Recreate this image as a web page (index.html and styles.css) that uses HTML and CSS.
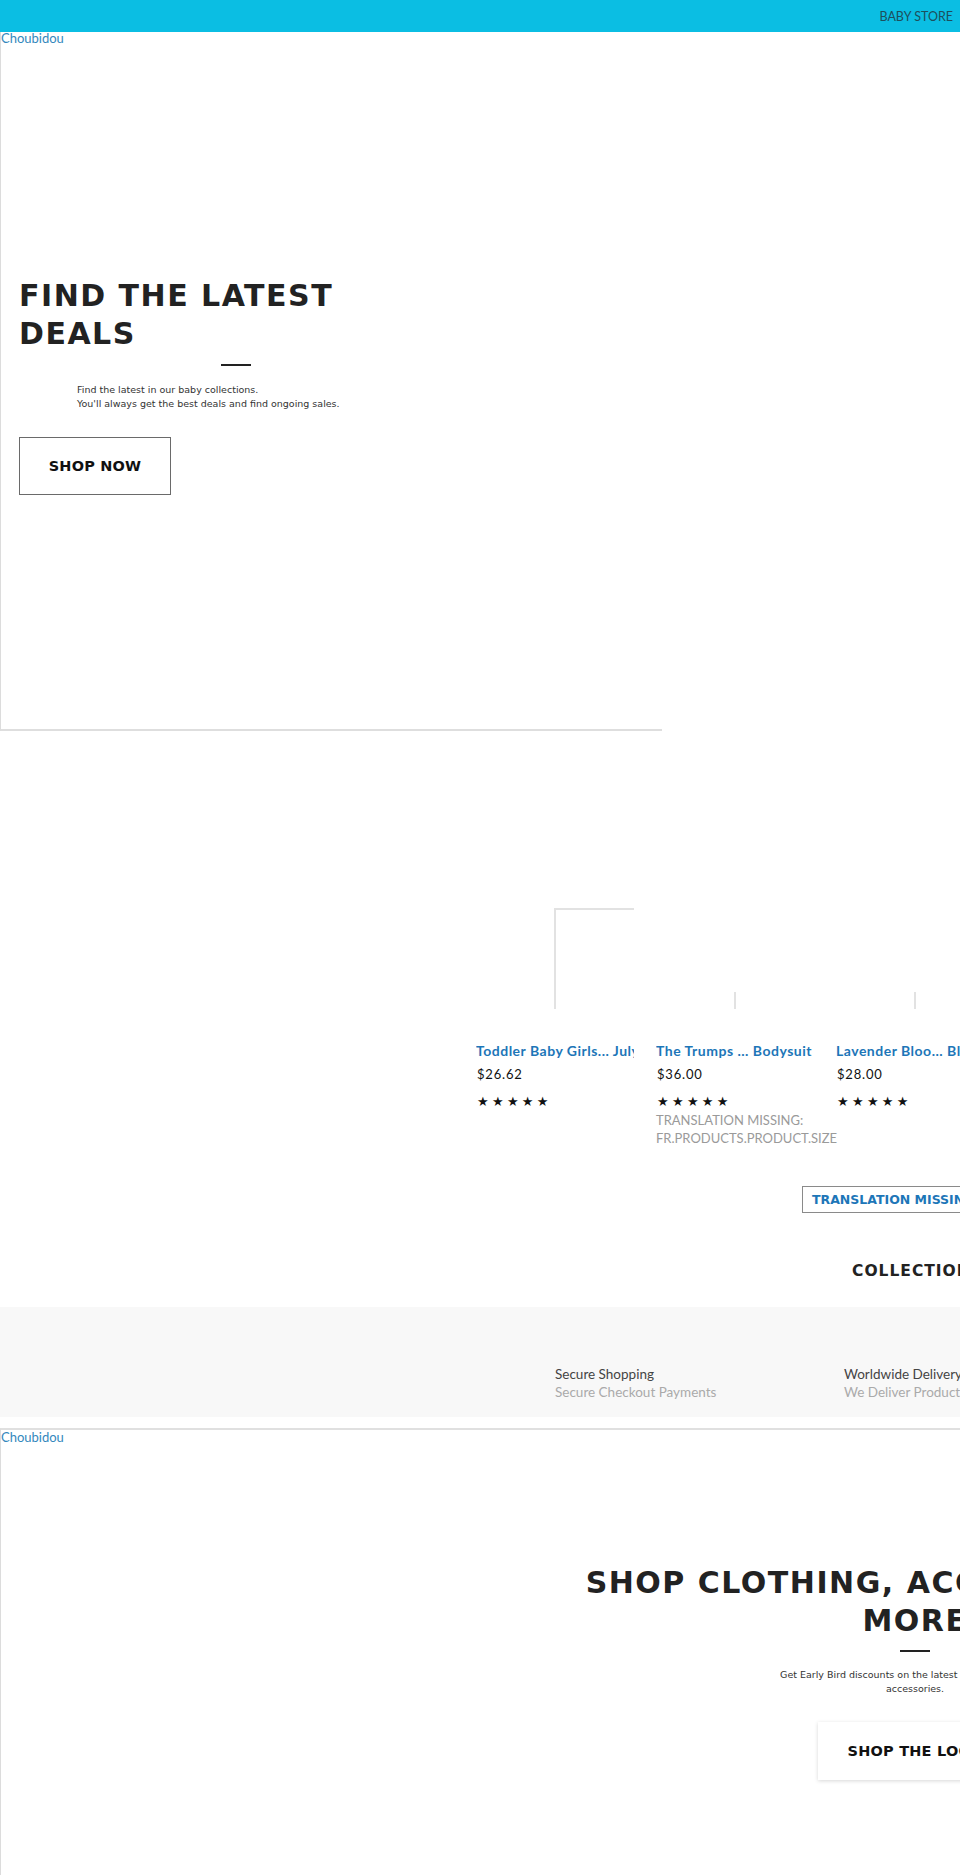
FILE: index.html
```html
<!DOCTYPE html>
<html>
    <head>
        <meta charset="UTF-8">
        <title>Choubidou - Baby Store</title>
        <link rel="stylesheet" href="styles.css">
    </head>
    <body>
        <div class="page">
            <div class="topbar">
                <span class="store-name">BABY STORE</span>
            </div>

            <div class="hero hero-left">
                <a class="brand" href="#">Choubidou</a>
                <div class="hero-content">
                    <h1 class="hero-title">FIND THE LATEST<br>DEALS</h1>
                    <span class="rule"></span>
                    <p class="hero-text">Find the latest in our baby collections.<br>You'll always get the best deals and find ongoing sales.</p>
                    <a class="hero-btn" href="#">SHOP NOW</a>
                </div>
            </div>

            <div class="products">
                <div class="product">
                    <div class="thumb"><span class="thumb-img tall"></span></div>
                    <a class="product-title" href="#">Toddler Baby Girls... July</a>
                    <div class="product-price">$26.62</div>
                    <div class="stars">★★★★★</div>
                </div>
                <div class="product">
                    <div class="thumb"><span class="thumb-img"></span></div>
                    <a class="product-title" href="#">The Trumps ... Bodysuit</a>
                    <div class="product-price">$36.00</div>
                    <div class="stars">★★★★★</div>
                    <div class="product-size">TRANSLATION MISSING:<br>FR.PRODUCTS.PRODUCT.SIZE</div>
                </div>
                <div class="product">
                    <div class="thumb"><span class="thumb-img"></span></div>
                    <a class="product-title" href="#">Lavender Bloo... Blossom</a>
                    <div class="product-price">$28.00</div>
                    <div class="stars">★★★★★</div>
                </div>
            </div>

            <div class="more-row">
                <a class="more-btn" href="#">TRANSLATION MISSING: FR.GENERAL.VIEW_ALL</a>
            </div>

            <h2 class="collections-title">COLLECTIONS</h2>

            <div class="services">
                <div class="service">
                    <div class="service-name">Secure Shopping</div>
                    <div class="service-desc">Secure Checkout Payments</div>
                </div>
                <div class="service">
                    <div class="service-name">Worldwide Delivery</div>
                    <div class="service-desc">We Deliver Products Worldwide</div>
                </div>
            </div>

            <div class="hero hero-center">
                <a class="brand" href="#">Choubidou</a>
                <div class="hero-content">
                    <h1 class="hero-title">SHOP CLOTHING, ACCESSORIES AND<br>MORE</h1>
                    <span class="rule"></span>
                    <p class="hero-text">Get Early Bird discounts on the latest in our clothing and<br>accessories.</p>
                    <a class="hero-btn shadow" href="#">SHOP THE LOOK</a>
                </div>
            </div>
        </div>
    </body>
</html>
```

FILE: styles.css
```css
html, body {
    margin: 0;
    padding: 0;
    overflow-x: hidden;
}
body {
    font-family: "DejaVu Sans", sans-serif;
    color: #222;
    background: #fff;
}
a {
    text-decoration: none;
}
.page {
    width: 960px;
    overflow: hidden;
}

/* top bar */
.topbar {
    height: 32px;
    background: #0bbee3;
    display: flex;
    align-items: center;
    justify-content: flex-end;
    padding-right: 7px;
}
.store-name {
    font-family: Lato, sans-serif;
    font-size: 12.5px;
    color: #1d4f5c;
}

/* heroes */
.hero {
    border-left: 1px solid #dcdcdc;
}
.brand {
    display: block;
    font-family: Lato, sans-serif;
    font-size: 13px;
    line-height: 12px;
    color: #3388bd;
}
.hero-left {
    width: 661px;
    height: 697px;
    border-bottom: 2px solid #dedede;
}
.hero-left .hero-content {
    width: 434px;
    margin: 233px 0 0 18px;
}
.hero-title {
    margin: 0;
    font-size: 30px;
    line-height: 38px;
    letter-spacing: 1.5px;
    font-weight: bold;
    color: #222;
}
.rule {
    display: block;
    width: 30px;
    height: 2px;
    background: #222;
    margin: 11px auto 0;
}
.hero-text {
    margin: 17px auto 0;
    width: 318px;
    font-size: 9.5px;
    line-height: 14px;
    color: #333;
}
.hero-btn {
    display: flex;
    align-items: center;
    justify-content: center;
    box-sizing: border-box;
    width: 152px;
    height: 58px;
    margin-top: 26px;
    border: 1px solid #6a6a6a;
    font-size: 14.5px;
    font-weight: bold;
    letter-spacing: 0.2px;
    color: #111;
}

.hero-center {
    height: 697px;
    border-top: 2px solid #e0e0e0;
    margin-top: 11px;
}
.hero-center .brand {
    margin-top: 1px;
}
.hero-center .hero-content {
    width: 660px;
    margin: 121px 0 0 584px;
    text-align: center;
}
.hero-center .rule {
    margin-top: 10px;
}
.hero-center .hero-text {
    width: 340px;
    margin-top: 16px;
}
.hero-btn.shadow {
    width: auto;
    display: inline-flex;
    padding: 0 30px;
    border: none;
    box-shadow: 0 1px 4px rgba(0, 0, 0, 0.16);
}

/* products */
.products {
    display: flex;
    margin: 177px 0 0 476px;
}
.product {
    width: 158px;
    flex: none;
    margin-right: 22px;
}
.thumb {
    height: 101px;
    display: flex;
    align-items: flex-end;
}
.thumb-img {
    display: block;
    margin-left: 78px;
    width: 80px;
    height: 17px;
    box-sizing: border-box;
    border-left: 2px solid #e2e2e2;
}
.thumb-img.tall {
    height: 101px;
    border-top: 2px solid #e2e2e2;
}
.product-title {
    display: block;
    margin-top: 32px;
    font-family: Lato, sans-serif;
    font-weight: bold;
    font-size: 14px;
    line-height: 20px;
    letter-spacing: 0.5px;
    color: #1d76b8;
    white-space: nowrap;
    overflow: hidden;
}
.product-price {
    margin-top: 4px;
    padding-left: 1px;
    font-family: Lato, sans-serif;
    font-size: 13px;
    line-height: 18px;
    letter-spacing: 0.8px;
    color: #111;
}
.stars {
    margin-top: 10px;
    padding-left: 1px;
    font-size: 13px;
    line-height: 18px;
    letter-spacing: 3.3px;
    color: #111;
}
.product-size {
    font-family: Lato, sans-serif;
    font-size: 13px;
    line-height: 18px;
    color: #9a9a9a;
    white-space: nowrap;
}

/* view all */
.more-row {
    margin: 39px 0 0 802px;
}
.more-btn {
    display: inline-block;
    height: 25px;
    line-height: 25px;
    padding: 0 9px;
    border: 1px solid #8a8a8a;
    font-size: 12.5px;
    font-weight: bold;
    color: #1d76b8;
    white-space: nowrap;
}

.collections-title {
    margin: 48px 0 0 852px;
    font-size: 15.5px;
    line-height: 20px;
    letter-spacing: 1px;
    font-weight: bold;
    color: #222;
    white-space: nowrap;
}

/* services band */
.services {
    margin-top: 26px;
    height: 110px;
    box-sizing: border-box;
    padding: 58px 0 0 555px;
    background: #f8f8f8;
    display: flex;
}
.service {
    width: 289px;
    flex: none;
    font-family: Lato, sans-serif;
    font-size: 13.5px;
    line-height: 18px;
    white-space: nowrap;
}
.service-name {
    color: #444;
}
.service-desc {
    color: #aaa;
}
```
